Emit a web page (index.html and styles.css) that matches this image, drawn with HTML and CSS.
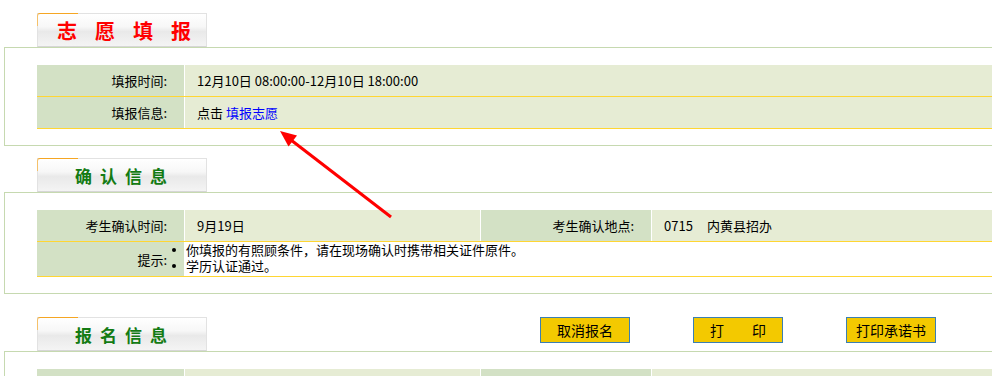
FILE: index.html
```html
<!DOCTYPE html>
<html lang="zh-CN">
<head>
    <meta charset="UTF-8">
    <title>志愿填报</title>
    <link rel="stylesheet" href="styles.css">
</head>
<body>
    <div class="tab"><span class="tab-title red">志愿填报</span></div>
    <div class="box">
        <table class="info">
            <tr>
                <td class="label">填报时间:</td>
                <td class="value">12月10日 08:00:00-12月10日 18:00:00</td>
            </tr>
            <tr>
                <td class="label">填报信息:</td>
                <td class="value">点击 <a href="#">填报志愿</a></td>
            </tr>
        </table>
    </div>

    <div class="tab tab-second"><span class="tab-title green">确认信息</span></div>
    <div class="box">
        <table class="info">
            <tr>
                <td class="label">考生确认时间:</td>
                <td class="value col-two">9月19日</td>
                <td class="label col-three">考生确认地点:</td>
                <td class="value">0715<span class="gap"></span>内黄县招办</td>
            </tr>
            <tr class="tips-row">
                <td class="label">提示:</td>
                <td class="tips" colspan="3">
                    <ul>
                        <li>你填报的有照顾条件，请在现场确认时携带相关证件原件。</li>
                        <li>学历认证通过。</li>
                    </ul>
                </td>
            </tr>
        </table>
    </div>

    <div class="title-row">
        <div class="tab"><span class="tab-title green">报名信息</span></div>
        <div class="actions">
            <button>取消报名</button>
            <button>打&emsp;&emsp;印</button>
            <button>打印承诺书</button>
        </div>
    </div>
    <div class="box">
        <table class="info">
            <tr>
                <td class="label">&nbsp;</td>
                <td class="value col-two">&nbsp;</td>
                <td class="label col-three">&nbsp;</td>
                <td class="value">&nbsp;</td>
            </tr>
        </table>
    </div>

    <!-- red annotation arrow -->
    <svg class="arrow" width="992" height="376" viewBox="0 0 992 376">
        <line x1="391" y1="217" x2="291" y2="140" stroke="#ff0000" stroke-width="3"/>
        <polygon points="280,131 297,135.5 288.5,146.5" fill="#ff0000"/>
    </svg>
</body>
</html>
```

FILE: styles.css
```css
html, body {
    overflow: hidden;
}
body {
    margin: 0;
    padding: 13px 0 0 4px;
    font-family: "Noto Sans CJK SC", "Liberation Sans", sans-serif;
    font-size: 13px;
    color: #000;
    background: #fff;
    position: relative;
    width: 1100px;
    height: 376px;
}
.tab {
    position: relative;
    width: 168px;
    height: 32px;
    margin-left: 33px;
    border: 1px solid #e2e2e2;
    border-bottom-color: #d6d6d6;
    background: linear-gradient(#ffffff 0%, #f7f7f7 40%, #e9e9e9 55%, #f4f4f4 100%);
    display: flex;
    align-items: center;
}
.tab::before {
    content: "";
    position: absolute;
    left: -1px;
    top: -1px;
    width: 40px;
    height: 12px;
    border-top: 1px solid #f5a623;
    border-left: 1px solid #f5c16a;
    border-top-left-radius: 3px;
}
.tab-second {
    margin-top: 12px;
}
.tab-title {
    font-weight: bold;
    white-space: nowrap;
}
.tab-title.red {
    color: #ff0000;
    font-size: 20px;
    letter-spacing: 18px;
    padding-left: 19px;
}
.tab-title.green {
    color: #137b13;
    font-size: 17px;
    letter-spacing: 8px;
    padding-left: 37px;
}
.box {
    width: 1060px;
    border: 1px solid #c6d9b0;
    padding: 17px 0 16px 32px;
}
.info {
    width: 100%;
    border-collapse: collapse;
}
.info td {
    height: 31px;
    padding: 0;
    border-bottom: 1px solid #ffd633;
    white-space: nowrap;
}
.info .label {
    width: 130px;
    padding-right: 17px;
    text-align: right;
    background: #d3e1c5;
    border-right: 1px solid #fff;
}
.info .value {
    padding-left: 12px;
    background: #e6ecd4;
}
.info .col-two {
    width: 283px;
    border-right: 1px solid #fff;
}
.info .col-three {
    width: 153px;
}
.gap {
    display: inline-block;
    width: 14px;
}
a {
    color: #0000ff;
    text-decoration: none;
}
.tips-row td {
    height: 34px;
}
.info .tips {
    background: #fff;
    vertical-align: top;
    padding-left: 1px;
}
.tips ul {
    margin: 0;
    padding: 0;
    list-style: none;
}
.tips li {
    position: relative;
    line-height: 16px;
}
.tips li::before {
    content: "";
    position: absolute;
    left: -14px;
    top: 6px;
    width: 4px;
    height: 4px;
    border-radius: 50%;
    background: #000;
}
.title-row {
    display: flex;
    align-items: flex-start;
    margin-top: 23px;
}
.actions {
    display: flex;
    gap: 63px;
    margin-left: 333px;
}
.actions button {
    width: 90px;
    height: 26px;
    padding: 0;
    font-family: "Noto Sans CJK SC", sans-serif;
    font-size: 14px;
    color: #000;
    background: #f3c900;
    border: 1px solid #3b7fb3;
    cursor: pointer;
}
.arrow {
    position: absolute;
    left: 0;
    top: 0;
    pointer-events: none;
}
```
